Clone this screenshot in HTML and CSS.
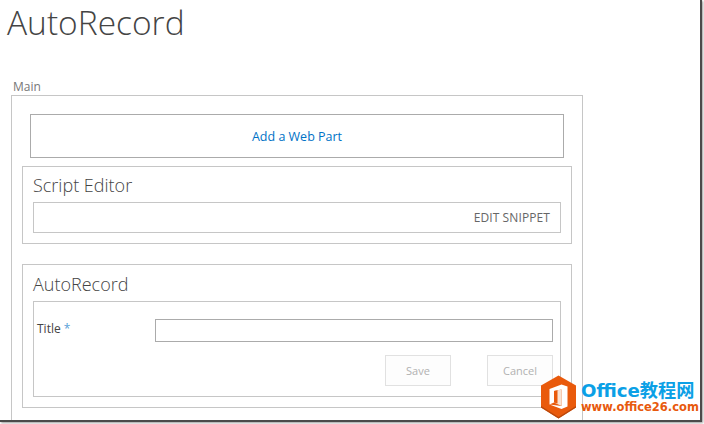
FILE: index.html
```html
<!DOCTYPE html>
<html lang="en">
<head>
<meta charset="utf-8">
<title>AutoRecord</title>
<link rel="stylesheet" href="styles.css">
</head>
<body>
<div class="frame">
  <h1 class="page-title">AutoRecord</h1>
  <div class="zone-label">Main</div>
  <div class="zone">
    <div class="add-part"><a class="add-link">Add a Web Part</a></div>
    <section class="part part-script">
      <h2 class="part-title">Script Editor</h2>
      <div class="part-body snippet-body"><span class="snippet">EDIT SNIPPET</span></div>
    </section>
    <section class="part part-form">
      <h2 class="part-title">AutoRecord</h2>
      <div class="part-body form-body">
        <div class="field">
          <label class="field-label">Title <span class="req">*</span></label>
          <div class="field-input"></div>
        </div>
        <div class="actions">
          <button class="btn">Save</button>
          <button class="btn">Cancel</button>
        </div>
      </div>
    </section>
  </div>
</div>
<div class="logo">
  <svg class="logo-icon" width="37" height="44" viewBox="0 0 37 44">
    <path d="M18.5 0.5 L36 10.5 V32.5 L18.5 43.5 L1 32.5 V10.5 Z" fill="#e95a0c"/>
    <path d="M36 32.5 L18.5 43.5 L1 32.5 V31 L18.5 42 L36 31 Z" fill="#b8480c"/>
    <path d="M9.5 14 L21.5 9.5 L27.5 11.5 V31.5 L21.5 34 L9.5 29.5 L21.5 31 V14.5 L14 16 V27.5 L9.5 29.5 Z" fill="#fff"/>
    <path d="M14 16 L21.5 14.5 V31 L14 27.5 Z" fill="#f8e3d3"/>
    <path d="M14 16 L17.5 15.3 V28.5 L14 27.5 Z" fill="#e95a0c"/>
  </svg>
  <div class="logo-text">
    <div class="logo-name">Office教程网</div>
    <div class="logo-url">www.office26.com</div>
  </div>
</div>
</body>
</html>
```
FILE: styles.css
```css
html, body { margin: 0; padding: 0; background: #fff; }
body {
  width: 704px;
  height: 424px;
  overflow: hidden;
  position: relative;
  font-family: "Open Sans", "Noto Sans CJK SC", sans-serif;
}
.frame {
  box-sizing: border-box;
  width: 702px;
  height: 422px;
  overflow: hidden;
  background: #fff;
  border-right: 2px solid #4a4a4a;
  border-bottom: 2px solid #4a4a4a;
  box-shadow: 1px 1px 2px rgba(0,0,0,.4);
  padding-left: 11px;
}
.page-title {
  margin: 0 0 0 -4px;
  height: 78px;
  font-size: 33.5px;
  line-height: 44px;
  font-weight: 300;
  color: #444;
  letter-spacing: 0;
}
.zone-label {
  height: 17px;
  padding-left: 2px;
  font-size: 12px;
  line-height: 17px;
  color: #777;
}
.zone {
  box-sizing: border-box;
  width: 572px;
  height: 360px;
  border: 1px solid #c6c6c6;
  padding: 18px 10px 0;
}
.add-part {
  box-sizing: border-box;
  width: 534px;
  height: 44px;
  margin-left: 8px;
  border: 1px solid #ababab;
  display: flex;
  align-items: center;
  justify-content: center;
}
.add-link { font-size: 12.5px; color: #0072c6; }
.part {
  box-sizing: border-box;
  width: 550px;
  border: 1px solid #c6c6c6;
  padding: 0 10px;
}
.part-script { height: 78px; margin-top: 8px; }
.part-form { height: 144px; margin-top: 20px; padding-top: 1px; }
.part-title {
  margin: 0;
  height: 35px;
  font-size: 18px;
  line-height: 36px;
  font-weight: 300;
  color: #444;
}
.part-body {
  box-sizing: border-box;
  width: 528px;
  border: 1px solid #c6c6c6;
}
.snippet-body {
  height: 31px;
  display: flex;
  align-items: center;
  justify-content: flex-end;
  padding-right: 10px;
}
.snippet { font-size: 12px; letter-spacing: 0.1px; color: #666; }
.form-body {
  height: 96px;
  padding: 17px 7px 0 3px;
}
.field { display: flex; align-items: flex-start; }
.field-label {
  width: 118px;
  padding-top: 1px;
  font-size: 12px;
  line-height: 18px;
  color: #444;
}
.req { color: #5a9fd8; }
.field-input {
  box-sizing: border-box;
  width: 398px;
  height: 23px;
  border: 1px solid #ababab;
}
.actions {
  display: flex;
  justify-content: flex-end;
  gap: 36px;
  margin-top: 13px;
}
.btn {
  box-sizing: border-box;
  width: 66px;
  height: 31px;
  padding: 0;
  background: #fdfdfd;
  border: 1px solid #e1e1e1;
  font-family: inherit;
  font-size: 11px;
  color: #b1b1b1;
}
.logo {
  position: absolute;
  left: 540px;
  top: 375px;
  display: flex;
  gap: 4px;
}
.logo-text { margin-top: 5px; }
.logo-name {
  font-family: "DejaVu Sans", "Noto Sans CJK SC", sans-serif;
  font-weight: 700;
  font-size: 18.2px;
  line-height: 21px;
  color: #0ba0e6;
  white-space: nowrap;
}
.logo-url {
  font-family: "DejaVu Sans", sans-serif;
  font-weight: 700;
  font-size: 11.5px;
  line-height: 13px;
  color: #e8590c;
  white-space: nowrap;
}
```
